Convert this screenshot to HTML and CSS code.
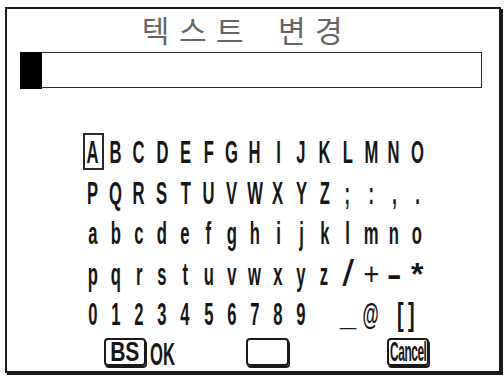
FILE: index.html
```html
<!DOCTYPE html>
<html lang="ko">
<head>
<meta charset="utf-8">
<title>텍스트 변경</title>
<link rel="stylesheet" href="styles.css">
</head>
<body>
<div class="frame">
  <div class="title">텍스트 변경</div>
  <div class="input"><span class="cursor"></span></div>
  <div class="kb">
    <div class="row">
      <span class="k sel"><i>A</i></span><span class="k"><i>B</i></span><span class="k"><i>C</i></span><span class="k"><i>D</i></span><span class="k"><i>E</i></span><span class="k"><i>F</i></span><span class="k"><i>G</i></span><span class="k"><i>H</i></span><span class="k"><i>I</i></span><span class="k"><i>J</i></span><span class="k"><i>K</i></span><span class="k"><i>L</i></span><span class="k"><i>M</i></span><span class="k"><i>N</i></span><span class="k"><i>O</i></span>
    </div>
    <div class="row">
      <span class="k"><i>P</i></span><span class="k"><i>Q</i></span><span class="k"><i>R</i></span><span class="k"><i>S</i></span><span class="k"><i>T</i></span><span class="k"><i>U</i></span><span class="k"><i>V</i></span><span class="k"><i>W</i></span><span class="k"><i>X</i></span><span class="k"><i>Y</i></span><span class="k"><i>Z</i></span><span class="k"><i>;</i></span><span class="k"><i>:</i></span><span class="k"><i>,</i></span><span class="k"><i>.</i></span>
    </div>
    <div class="row">
      <span class="k"><i>a</i></span><span class="k"><i>b</i></span><span class="k"><i>c</i></span><span class="k"><i>d</i></span><span class="k"><i>e</i></span><span class="k"><i>f</i></span><span class="k"><i>g</i></span><span class="k"><i>h</i></span><span class="k"><i>i</i></span><span class="k"><i>j</i></span><span class="k"><i>k</i></span><span class="k"><i>l</i></span><span class="k"><i>m</i></span><span class="k"><i>n</i></span><span class="k"><i>o</i></span>
    </div>
    <div class="row">
      <span class="k"><i>p</i></span><span class="k"><i>q</i></span><span class="k"><i>r</i></span><span class="k"><i>s</i></span><span class="k"><i>t</i></span><span class="k"><i>u</i></span><span class="k"><i>v</i></span><span class="k"><i>w</i></span><span class="k"><i>x</i></span><span class="k"><i>y</i></span><span class="k"><i>z</i></span><span class="k k-slash"><i>/</i></span><span class="k k-plus"><i>+</i></span><span class="k k-minus"><i>-</i></span><span class="k k-star"><i>*</i></span>
    </div>
    <div class="row">
      <span class="k"><i>0</i></span><span class="k"><i>1</i></span><span class="k"><i>2</i></span><span class="k"><i>3</i></span><span class="k"><i>4</i></span><span class="k"><i>5</i></span><span class="k"><i>6</i></span><span class="k"><i>7</i></span><span class="k"><i>8</i></span><span class="k"><i>9</i></span><span class="k"><i></i></span><span class="k k-under"><i>_</i></span><span class="k"><i>@</i></span><span class="k k-br k-end"><i>[</i></span><span class="k k-br k-start"><i>]</i></span>
    </div>
  </div>
  <div class="bar">
    <span class="btn bs"><i>BS</i></span>
    <span class="ok"><i>OK</i></span>
    <span class="btn blank"></span>
    <span class="btn cancel"><i>Cancel</i></span>
  </div>
</div>
</body>
</html>
```
FILE: styles.css
```css
html, body {
  margin: 0;
  padding: 0;
  background: #fff;
}
body {
  width: 504px;
  height: 376px;
  overflow: hidden;
  font-family: "Liberation Sans", Arial, sans-serif;
  color: #161616;
}
.frame {
  margin: 7px 0 0 5px;
  width: 496px;
  height: 366px;
  box-sizing: border-box;
  border: 2px solid #1a1a1a;
  box-shadow: 2px 2px 0 #1a1a1a;
}
.title {
  font-family: "Noto Sans CJK KR", "Noto Sans", sans-serif;
  font-size: 30px;
  line-height: 40px;
  height: 40px;
  text-align: center;
  color: #666;
  letter-spacing: 9.5px;
  word-spacing: 7px;
  padding-right: 12px;
}
.input {
  margin: 3px 0 0 13px;
  width: 462px;
  height: 36px;
  box-sizing: border-box;
  border: 1.5px solid #2a2a2a;
  display: flex;
}
.cursor {
  width: 22px;
  background: #000;
  margin: -1.5px 0 -1.5px -1.5px;
}
.kb {
  margin-top: 44px;
  padding-left: 74px;
}
.row {
  display: flex;
  height: 40.5px;
}
.k {
  position: relative;
  width: 23.2px;
  flex: none;
  display: flex;
  justify-content: center;
  font-size: 32px;
  line-height: 40px;
  font-weight: bold;
}
.k i, .ok i, .btn i {
  font-style: normal;
  display: inline-block;
  transform: scaleX(0.52);
}
.k-end { justify-content: flex-end; }
.k-start { justify-content: flex-start; }
.k-slash i {
  font-weight: normal;
  font-size: 37px;
  transform: scaleX(1.15);
}
.k-plus i {
  font-weight: normal;
  transform: scaleX(0.85);
}
.k-minus i { transform: scaleX(1.4); }
.k-star i { transform: scaleX(1); }
.k-under i { transform: scaleX(0.9); }
.k-br i { transform: scaleX(0.62); }
.sel::after {
  content: "";
  position: absolute;
  left: 2px;
  right: 0;
  top: 1px;
  bottom: 2.5px;
  border: 2px solid #2a2a2a;
}
.bar {
  display: flex;
  align-items: flex-start;
  padding: 3px 0 0 97px;
}
.btn {
  box-sizing: border-box;
  height: 28px;
  border: 2px solid #1a1a1a;
  border-radius: 4px;
  box-shadow: 1px 2px 0 #1a1a1a;
  display: flex;
  justify-content: center;
  align-items: center;
  overflow: hidden;
  font-weight: bold;
}
.bs {
  width: 42px;
  font-size: 27px;
  line-height: 24px;
}
.bs i {
  transform: scaleX(0.78);
}
.ok {
  margin-left: 4px;
  font-size: 32px;
  line-height: 32px;
  font-weight: bold;
}
.ok i {
  transform-origin: left center;
}
.blank {
  width: 43px;
  margin-left: 48px;
}
.cancel {
  width: 42px;
  margin-left: 98px;
  font-size: 27px;
  line-height: 24px;
  letter-spacing: -1px;
}
.cancel i {
  transform: scaleX(0.44);
}
```
